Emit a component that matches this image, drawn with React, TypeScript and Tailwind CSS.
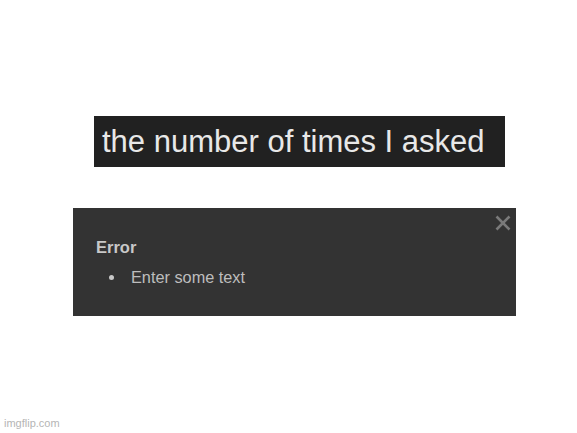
import React from "react";

function App() {
   return (
      <div className="relative w-[577px] h-[433px] bg-white overflow-hidden font-['Liberation_Sans',Arial,sans-serif]">
         <div className="flex flex-col pt-[116px]">
            {/* Caption bar */}
            <div className="ml-[94px] w-[411px] h-[51px] bg-[#212121] flex items-center pl-[8px]">
               <span className="text-[31px] leading-none text-[#e8e8e8]">the number of times I asked</span>
            </div>

            {/* Error box */}
            <div className="relative ml-[73px] mt-[41px] w-[443px] h-[108px] bg-[#333333] pl-[23px] pt-[30px]">
               <div className="text-[16.5px] font-bold text-[#c8c8c8] leading-[18px]">Error</div>
               <ul className="mt-[12px] ml-[13px] flex flex-col">
                  <li className="flex items-center text-[16.3px] leading-[18px] text-[#bdbdbd]">
                     <span className="w-[5px] h-[5px] rounded-full bg-[#c8c8c8] mr-[17px]" />
                     Enter some text
                  </li>
               </ul>
               <svg className="absolute right-[5px] top-[7px]" width="16" height="16" viewBox="0 0 16 16">
                  <path d="M1.5 1.5 L14.5 14.5 M14.5 1.5 L1.5 14.5" stroke="#7a7a7a" strokeWidth="2.6" />
               </svg>
            </div>
         </div>

         {/* Watermark */}
         <div className="absolute left-[4px] bottom-[4px] text-[11px] text-[#b5b5b5] leading-none">imgflip.com</div>
      </div>
   );
}

export default App;
